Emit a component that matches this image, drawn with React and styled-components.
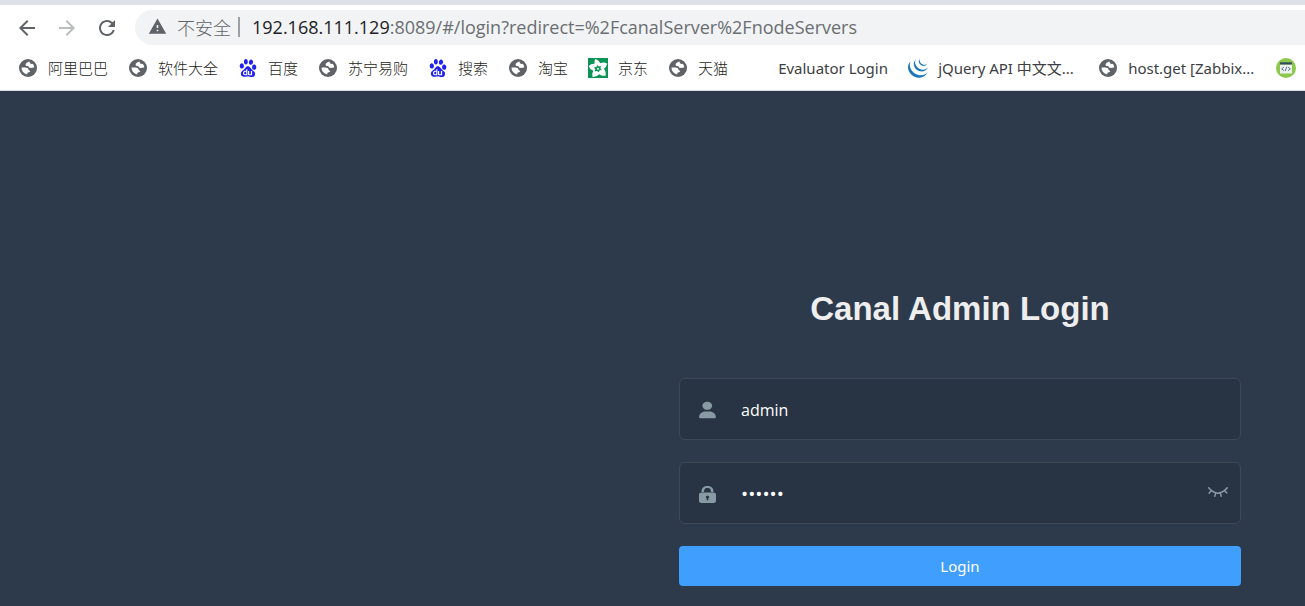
import React, { useState } from 'react';
import styled, { createGlobalStyle } from 'styled-components';
import { MdArrowBack, MdArrowForward, MdRefresh, MdWarning } from 'react-icons/md';
import { SiBaidu, SiJquery } from 'react-icons/si';

const uiFont = '"Open Sans", "Noto Sans CJK SC", sans-serif';

const GlobalStyle = createGlobalStyle`
  * { box-sizing: border-box; }
  body {
    margin: 0;
    background: #2d3a4b;
    font-family: ${uiFont};
  }
`;

const Page = styled.div`
  display: flex;
  flex-direction: column;
  min-height: 100vh;
`;

const Chrome = styled.header`
  background: #fff;
  border-top: 5px solid #dee1e6;
  border-bottom: 1px solid #dadce0;
  overflow: hidden;
`;

const Toolbar = styled.div`
  display: flex;
  align-items: center;
  padding: 5px 0 0 15px;
`;

const NavButton = styled.button`
  display: flex;
  width: 24px;
  height: 24px;
  margin-right: 16px;
  padding: 0;
  border: 0;
  background: none;
  color: #5f6368;
  font-size: 24px;
  &:disabled { color: #babcbe; }
`;

const AddressBar = styled.div`
  display: flex;
  flex: 1;
  align-items: center;
  height: 35px;
  padding: 0 0 2px 13px;
  border-radius: 18px 0 0 18px;
  background: #f1f3f4;
  color: #5f6368;
  font-size: 18px;
  white-space: nowrap;
`;

const Security = styled.span`
  display: flex;
  align-items: center;
  gap: 10px;
  padding-right: 7px;
  font-weight: 300;
  svg { font-size: 19px; }
`;

const Divider = styled.span`
  width: 2px;
  height: 20px;
  margin-right: 12px;
  background: #9aa0a6;
`;

const Url = styled.span`
  color: #6b6e72;
`;

const Host = styled.span`
  color: #202124;
`;

const Bookmarks = styled.nav`
  display: flex;
  gap: 20px;
  height: 45px;
  padding-left: 18px;
  align-items: center;
`;

const Bookmark = styled.a`
  display: flex;
  flex: none;
  align-items: center;
  gap: 10px;
  color: ${(p) => (p.$latin ? '#3c4043' : '#1c1e20')};
  font-size: 15px;
  line-height: 20px;
  text-decoration: none;
  white-space: nowrap;
`;

const Favicon = styled.span`
  display: flex;
  align-items: center;
  justify-content: center;
  width: 20px;
  height: 20px;
  font-size: ${(p) => p.$size || 20}px;
  color: ${(p) => p.$color || '#5f6368'};
`;

const BookmarkLabel = styled.span`
  width: ${(p) => (p.$width ? `${p.$width}px` : 'auto')};
  font-family: "Noto Sans", "Noto Sans CJK SC", sans-serif;
  font-weight: ${(p) => (p.$width ? 400 : 300)};
`;

const Main = styled.main`
  display: flex;
  flex: 1;
  justify-content: flex-end;
  padding: 193px 64px 20px;
  background: #2d3a4b;
`;

const LoginForm = styled.form`
  display: flex;
  flex-direction: column;
  gap: 22px;
  width: 100%;
  max-width: 562px;
`;

const Title = styled.h1`
  margin: 0 0 22px;
  color: #eee;
  font: bold 33px/50px "Liberation Sans", Arial, sans-serif;
  text-align: center;
`;

const Field = styled.div`
  display: flex;
  align-items: center;
  height: 62px;
  padding: 2px 12px 0 19px;
  border: 1px solid #3e4957;
  border-radius: 6px;
  background: #283443;
  color: #889aa4;
`;

const FieldLabel = styled.label`
  display: flex;
  margin-right: 25px;
`;

const Input = styled.input`
  flex: 1;
  min-width: 0;
  height: 58px;
  padding: 0;
  border: 0;
  outline: 0;
  background: transparent;
  color: #fff;
  font-family: ${uiFont};
  font-size: ${(p) => (p.type === 'password' ? 19 : 16)}px;
`;

const EyeButton = styled.button`
  display: flex;
  padding: 0 0 4px;
  border: 0;
  background: none;
  color: inherit;
`;

const SubmitButton = styled.button`
  height: 40px;
  border: 0;
  border-radius: 4px;
  background: #409eff;
  color: #fff;
  font-family: "Noto Sans", sans-serif;
  font-size: 15px;
`;

const GlobeIcon = () => (
  <svg width="20" height="20" viewBox="0 0 20 20">
    <circle cx="10" cy="10" r="9" fill="#5f6368" />
    <path
      fill="#fff"
      d="M11.500 3.600C9.500 4.200 7.600 5.300 7.600 6.700c0 1 .9 1.300 2 1.400 1 .1.900.9 1.500 1.400.7.500 1.900.6 2.800.3.800-.2 1.400-.6 2.400-.3A6.500 6.500 0 0 0 14.800 5.700c-.9.500-1.900.4-2.500-.1-.600-.6-.7-1.300-.8-2z"
    />
    <path
      fill="#fff"
      d="M3.500 9.600h3.900c1.700 0 3 .8 3.200 2.100.1.900 1.500.5 1.500 1.500 0 1.200-2.200.8-2.700 1.700-.3.500-.1 1-.2 1.500A6.500 6.500 0 0 1 3.500 9.600z"
    />
  </svg>
);

const FlowerIcon = () => (
  <svg width="20" height="20" viewBox="0 0 20 20">
    <path fill="#0c9456" d="M0 0h20v20H0z" />
    <path
      fill="#fff"
      d="M7.200 1Q11.200 2.400 12.200 5.300Q15.300 3.500 19.200 5.400Q18.500 9 15.900 10.700Q18.300 13.500 17.600 17.700Q13.700 18.400 11.200 16.200Q8.600 19.200 4.600 19Q3.700 15.200 5.300 12.700Q1.700 11.400 .6 7.900Q3.300 5.400 6.600 5.700Q6 3.200 7.200 1z"
    />
    <path
      fill="#0c9456"
      d="M9.500 7l1.200 1.500 2.300-.5-.6 2.200 1.400 1.800-2.200.3-.9 2-1.700-1.400-2.300.6.6-2.200-1.400-1.800 2.300-.4z"
    />
    <circle cx="10" cy="10.700" r="1" fill="#fff" />
  </svg>
);

const CodeIcon = () => (
  <svg width="20" height="20" viewBox="0 0 20 20">
    <circle cx="10" cy="10" r="10" fill="#8cc84b" />
    <path fill="#ecf0f1" d="M4 6.500h12v9H4z" />
    <path fill="#324a5e" d="M4 4.300h12v2.200H4z" />
    <path
      fill="none"
      stroke="#66788a"
      strokeWidth="1"
      d="M7.900 9.200L5.700 10.900l2.200 1.700M12.100 9.200l2.200 1.700-2.200 1.700M10.800 8.700l-1.600 4.400"
    />
  </svg>
);

const UserIcon = () => (
  <svg width="17" height="18" viewBox="0 0 130 130" fill="currentColor">
    <path d="M63.444 64.996c20.633 0 37.359-14.308 37.359-31.953 0-17.649-16.726-31.952-37.359-31.952-20.631 0-37.36 14.303-37.36 31.952 0 17.645 16.729 31.953 37.36 31.953zM80.57 75.65H49.434c-26.652 0-48.26 18.477-48.26 41.27v2.664c0 9.316 21.608 9.325 48.26 9.325H80.57c26.649 0 48.256-.344 48.256-9.325v-2.663c0-22.794-21.605-41.271-48.256-41.271z" />
  </svg>
);

const LockIcon = () => (
  <svg width="17" height="17" viewBox="0 0 128 128" fill="currentColor">
    <path d="M108.8 44.322H89.6v-5.36c0-9.04-3.308-24.163-25.6-24.163-23.145 0-25.6 16.881-25.6 24.162v5.361H19.2v-5.36C19.2 15.281 36.798 0 64 0c27.202 0 44.8 15.281 44.8 38.961v5.361zm-32 39.356c0-5.44-5.763-9.832-12.8-9.832-7.037 0-12.8 4.392-12.8 9.832 0 3.682 2.567 6.808 6.407 8.477v11.205c0 2.718 2.875 4.962 6.4 4.962 3.524 0 6.4-2.244 6.4-4.962V92.155c3.833-1.669 6.393-4.795 6.393-8.477zM128 64v49.201c0 8.158-8.645 14.799-19.2 14.799H19.2C8.651 128 0 121.359 0 113.201V64c0-8.153 8.645-14.799 19.2-14.799h89.6c10.555 0 19.2 6.646 19.2 14.799z" />
  </svg>
);

const EyeIcon = () => (
  <svg width="20" height="10" viewBox="0 0 128 64" fill="currentColor">
    <path d="M127.072 7.994c1.37-2.208.914-5.152-.914-6.87-2.056-1.717-4.797-1.226-6.396.982-.229.245-25.586 32.382-55.74 32.382-29.24 0-55.74-32.382-55.968-32.627-1.6-1.963-4.57-2.208-6.397-.49C-.17 3.086-.399 6.275 1.2 8.238c.457.736 5.94 7.36 14.62 14.72L4.17 35.96c-1.828 1.963-1.6 5.152.228 6.87.457.98 1.6 1.471 2.742 1.471s2.284-.49 3.198-1.472l12.564-13.983c5.94 4.416 13.021 8.587 20.788 11.53l-4.797 17.418c-.685 2.699.686 5.397 3.198 6.133h1.37c2.057 0 3.884-1.472 4.341-3.68L52.6 42.83c3.655.736 7.538 1.227 11.422 1.227 3.883 0 7.767-.49 11.422-1.227l4.797 17.173c.457 2.208 2.513 3.68 4.34 3.68.457 0 .914 0 1.143-.246 2.513-.736 3.883-3.434 3.198-6.133l-4.797-17.172c7.767-2.944 14.848-7.114 20.788-11.53l12.336 13.738c.913.981 2.056 1.472 3.198 1.472s2.284-.49 3.198-1.472c1.828-1.963 1.828-4.906.228-6.87l-11.65-13.001c9.366-7.36 14.849-14.474 14.849-14.474z" />
  </svg>
);

const bookmarks = [
  { label: '阿里巴巴', icon: <GlobeIcon /> },
  { label: '软件大全', icon: <GlobeIcon /> },
  { label: '百度', icon: <SiBaidu />, color: '#1f22e8', size: 18 },
  { label: '苏宁易购', icon: <GlobeIcon /> },
  { label: '搜索', icon: <SiBaidu />, color: '#1f22e8', size: 18 },
  { label: '淘宝', icon: <GlobeIcon /> },
  { label: '京东', icon: <FlowerIcon /> },
  { label: '天猫', icon: <GlobeIcon /> },
  { label: 'Evaluator Login', icon: null, width: 110 },
  { label: 'jQuery API 中文文...', icon: <SiJquery />, color: '#1b75bb', width: 140 },
  { label: 'host.get [Zabbix...', icon: <GlobeIcon />, width: 128 },
  { label: '', icon: <CodeIcon />, name: 'Code tools' },
];

export default function App() {
  const [username, setUsername] = useState('admin');
  const [password, setPassword] = useState('canal1');
  const [visible, setVisible] = useState(false);

  return (
    <Page>
      <GlobalStyle />
      <Chrome>
        <Toolbar>
          <NavButton aria-label="Back"><MdArrowBack /></NavButton>
          <NavButton aria-label="Forward" disabled><MdArrowForward /></NavButton>
          <NavButton aria-label="Reload"><MdRefresh /></NavButton>
          <AddressBar>
            <Security><MdWarning />不安全</Security>
            <Divider />
            <Url>
              <Host>192.168.111.129</Host>
              :8089/#/login?redirect=%2FcanalServer%2FnodeServers
            </Url>
          </AddressBar>
        </Toolbar>
        <Bookmarks>
          {bookmarks.map((b, i) => (
            <Bookmark key={i} href="#" aria-label={b.name} $latin={Boolean(b.width)}>
              <Favicon $color={b.color} $size={b.size}>{b.icon}</Favicon>
              {b.label && <BookmarkLabel $width={b.width}>{b.label}</BookmarkLabel>}
            </Bookmark>
          ))}
        </Bookmarks>
      </Chrome>
      <Main>
        <LoginForm onSubmit={(e) => e.preventDefault()}>
          <Title>Canal Admin Login</Title>
          <Field>
            <FieldLabel htmlFor="username" aria-label="Username"><UserIcon /></FieldLabel>
            <Input id="username" value={username} onChange={(e) => setUsername(e.target.value)} />
          </Field>
          <Field>
            <FieldLabel htmlFor="password" aria-label="Password"><LockIcon /></FieldLabel>
            <Input
              id="password"
              type={visible ? 'text' : 'password'}
              value={password}
              onChange={(e) => setPassword(e.target.value)}
            />
            <EyeButton type="button" aria-label="Show password" onClick={() => setVisible(!visible)}>
              <EyeIcon />
            </EyeButton>
          </Field>
          <SubmitButton type="submit">Login</SubmitButton>
        </LoginForm>
      </Main>
    </Page>
  );
}
